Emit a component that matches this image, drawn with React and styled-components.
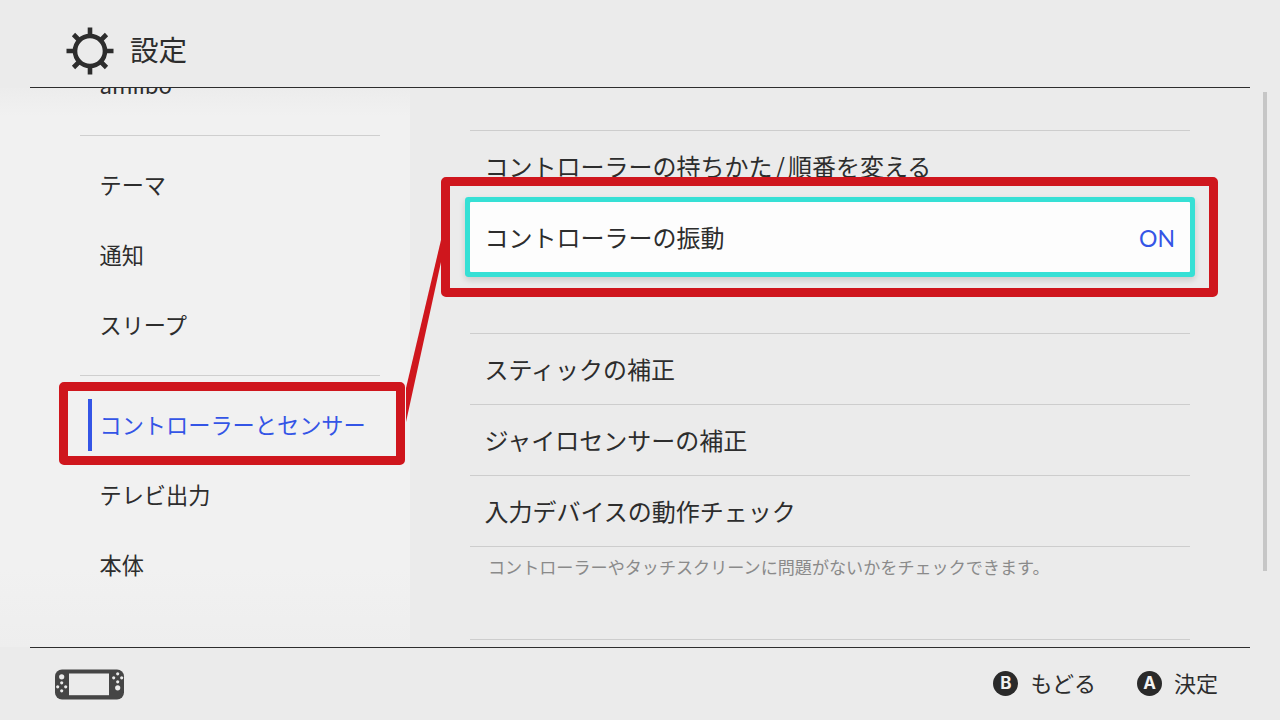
import React from "react";
import styled, { createGlobalStyle } from "styled-components";

const Global = createGlobalStyle`
  html, body { margin: 0; padding: 0; background: #ebebeb; }
  body { font-family: "Noto Sans CJK JP", "Noto Sans", sans-serif; color: #2d2d2d; }
`;

const Screen = styled.div`
  position: relative;
  width: 1280px;
  height: 720px;
  overflow: hidden;
  display: flex;
  flex-direction: column;
  background: #ebebeb;
`;

const Header = styled.header`
  flex: none;
  height: 73px;
  margin: 0 30px;
  padding: 14px 0 0 36px;
  display: flex;
  align-items: center;
  gap: 16px;
  border-bottom: 1px solid #2d2d2d;
  position: relative;
  z-index: 2;
  background: #ebebeb;
`;

const Title = styled.h1`
  margin: 0 0 2px;
  font-size: 28.6px;
  font-weight: 400;
  line-height: 1;
`;

const Body = styled.main`
  flex: 1;
  min-height: 0;
  display: flex;
`;

const Sidebar = styled.nav`
  flex: none;
  width: 410px;
  padding: 0 30px 0 80px;
  box-sizing: border-box;
  overflow: hidden;
  background: linear-gradient(180deg, #ececec 0, #f1f1f1 28px, #f1f1f1 480px, #eeeeee 100%);
`;

const SideList = styled.div`
  margin-top: -38px;
  display: flex;
  flex-direction: column;
`;

const SideItem = styled.div`
  position: relative;
  height: 70px;
  box-sizing: border-box;
  display: flex;
  align-items: center;
  padding: 0 0 3px 19.5px;
  font-size: 22.2px;
  color: ${(p) => (p.$active ? "#3455e6" : "#2d2d2d")};

  ${(p) =>
    p.$active &&
    `&::before {
      content: "";
      position: absolute;
      left: 8px;
      top: 9px;
      bottom: 9px;
      width: 4px;
      background: #3455e6;
    }`}
`;

const SideDivider = styled.hr`
  margin: 15px 0 14px;
  border: 0;
  height: 1px;
  background: #cfcfcf;
`;

const Content = styled.section`
  flex: 1;
  min-width: 0;
  padding: 42px 90px 0 60px;
  overflow: hidden;
`;

const Group = styled.div`
  border-top: 1px solid #cdcdcd;
  margin-bottom: ${(p) => p.$gap || 0}px;
`;

const Row = styled.div`
  height: 68px;
  display: flex;
  align-items: center;
  justify-content: space-between;
  padding: 0 15px 2px;
  font-size: 24px;
  border-bottom: 1px solid #cdcdcd;
`;

const FocusRow = styled(Row)`
  position: relative;
  z-index: 1;
  height: 68px;
  padding: 0 15px 2px;
  border-bottom: 0;
  border-radius: 1px;
  background: #fdfdfd;
  box-shadow: 0 0 0 5px #36e0d5, 0 3px 6px 5px rgba(0, 0, 0, 0.14);
`;

const RowLabel = styled.span`
  margin-left: -0.5px;
`;

const Slash = styled.span`
  padding: 0 3px;
`;

const Value = styled.span`
  font-family: "Lato", "Noto Sans", sans-serif;
  font-size: 23px;
  color: #3455e6;
  padding-top: 4px;
`;

const Note = styled.p`
  margin: 0;
  padding: 8px 18px 0;
  height: 92px;
  box-sizing: border-box;
  font-size: 17.1px;
  line-height: 24px;
  color: #8a8a8a;
`;

const Scrollbar = styled.div`
  position: absolute;
  left: 1263px;
  top: 92px;
  width: 4px;
  height: 479px;
  background: #c6c6c6;
`;

const Footer = styled.footer`
  flex: none;
  height: 72px;
  margin: 0 30px;
  padding: 0 32px 0 25px;
  display: flex;
  align-items: center;
  justify-content: space-between;
  border-top: 1px solid #2d2d2d;
  position: relative;
  z-index: 2;
  background: #ebebeb;
`;

const Hints = styled.div`
  display: flex;
  align-items: center;
  gap: 41px;
`;

const Hint = styled.div`
  display: flex;
  align-items: center;
  gap: 12px;
  font-size: 22px;
  color: #2d2d2d;
  padding-bottom: 2px;
`;

const HintLabel = styled.span`
  position: relative;
  top: -1px;
`;

const Glyph = styled.span`
  width: 25px;
  height: 25px;
  border-radius: 50%;
  background: #2a2a2a;
  color: #f2f2f2;
  display: flex;
  align-items: center;
  justify-content: center;
  font-family: "Inter", "Liberation Sans", sans-serif;
  font-weight: 700;
  font-size: 17px;
  line-height: 1;
`;

const Callout = styled.div`
  position: absolute;
  box-sizing: border-box;
  left: ${(p) => p.$x}px;
  top: ${(p) => p.$y}px;
  width: ${(p) => p.$w}px;
  height: ${(p) => p.$h}px;
  border: 9px solid #cf161d;
  border-radius: 5px;
  z-index: 3;
`;

const Connector = styled.svg`
  position: absolute;
  left: 400px;
  top: 235px;
  z-index: 3;
`;

const Gear = () => (
  <svg width="48" height="48" viewBox="0 0 48 48" fill="none" stroke="#2d2d2d">
    <circle cx="24" cy="24" r="15" strokeWidth="4.6" />
    <g strokeWidth="4.6">
      <path d="M24 0.5V10M24 38V47.5M0.5 24H10M38 24H47.5" />
      <path d="M7.5 7.5L13.5 13.5M34.5 34.5L40.5 40.5M40.5 7.5L34.5 13.5M13.5 34.5L7.5 40.5" />
    </g>
  </svg>
);

const ConsoleIcon = () => (
  <svg width="70" height="31" viewBox="0 0 70 31" fill="#ebebeb">
    <rect x="0" y="0.5" width="69" height="30" rx="7" fill="#454545" />
    <rect x="14" y="4.5" width="40" height="21.7" />
    <circle cx="6.7" cy="7.8" r="2.6" />
    <circle cx="6.7" cy="13.8" r="1.6" />
    <circle cx="6.7" cy="21.8" r="1.6" />
    <circle cx="2.7" cy="17.8" r="1.6" />
    <circle cx="10.7" cy="17.8" r="1.6" />
    <circle cx="62.7" cy="4.8" r="1.6" />
    <circle cx="62.7" cy="12.8" r="1.6" />
    <circle cx="58.7" cy="8.8" r="1.6" />
    <circle cx="66.7" cy="8.8" r="1.6" />
    <circle cx="62.7" cy="18.8" r="2.6" />
  </svg>
);

export default function App() {
  return (
    <Screen>
      <Global />
      <Header>
        <Gear />
        <Title>設定</Title>
      </Header>
      <Body>
        <Sidebar>
          <SideList>
            <SideItem>amiibo</SideItem>
            <SideDivider />
            <SideItem>テーマ</SideItem>
            <SideItem>通知</SideItem>
            <SideItem>スリープ</SideItem>
            <SideDivider />
            <SideItem $active>コントローラーとセンサー</SideItem>
            <SideItem>テレビ出力</SideItem>
            <SideItem>本体</SideItem>
          </SideList>
        </Sidebar>
        <Content>
          <Group $gap={61}>
            <Row><RowLabel>コントローラーの持ちかた<Slash>/</Slash>順番を変える</RowLabel></Row>
            <FocusRow>
              <RowLabel>コントローラーの振動</RowLabel>
              <Value>ON</Value>
            </FocusRow>
          </Group>
          <Group>
            <Row><RowLabel>スティックの補正</RowLabel></Row>
            <Row><RowLabel>ジャイロセンサーの補正</RowLabel></Row>
            <Row><RowLabel>入力デバイスの動作チェック</RowLabel></Row>
            <Note>コントローラーやタッチスクリーンに問題がないかをチェックできます。</Note>
          </Group>
          <Group />
        </Content>
      </Body>
      <Footer>
        <ConsoleIcon />
        <Hints>
          <Hint>
            <Glyph>B</Glyph>
            <HintLabel>もどる</HintLabel>
          </Hint>
          <Hint>
            <Glyph>A</Glyph>
            <HintLabel>決定</HintLabel>
          </Hint>
        </Hints>
      </Footer>
      <Scrollbar />
      <Callout $x={59} $y={382} $w={346} $h={83} />
      <Callout $x={441} $y={177} $w={777} $h={120} />
      <Connector width="42" height="190" viewBox="0 0 42 190">
        <polygon points="41,5 41,27 6,187 6,153" fill="#cf161d" />
      </Connector>
    </Screen>
  );
}
